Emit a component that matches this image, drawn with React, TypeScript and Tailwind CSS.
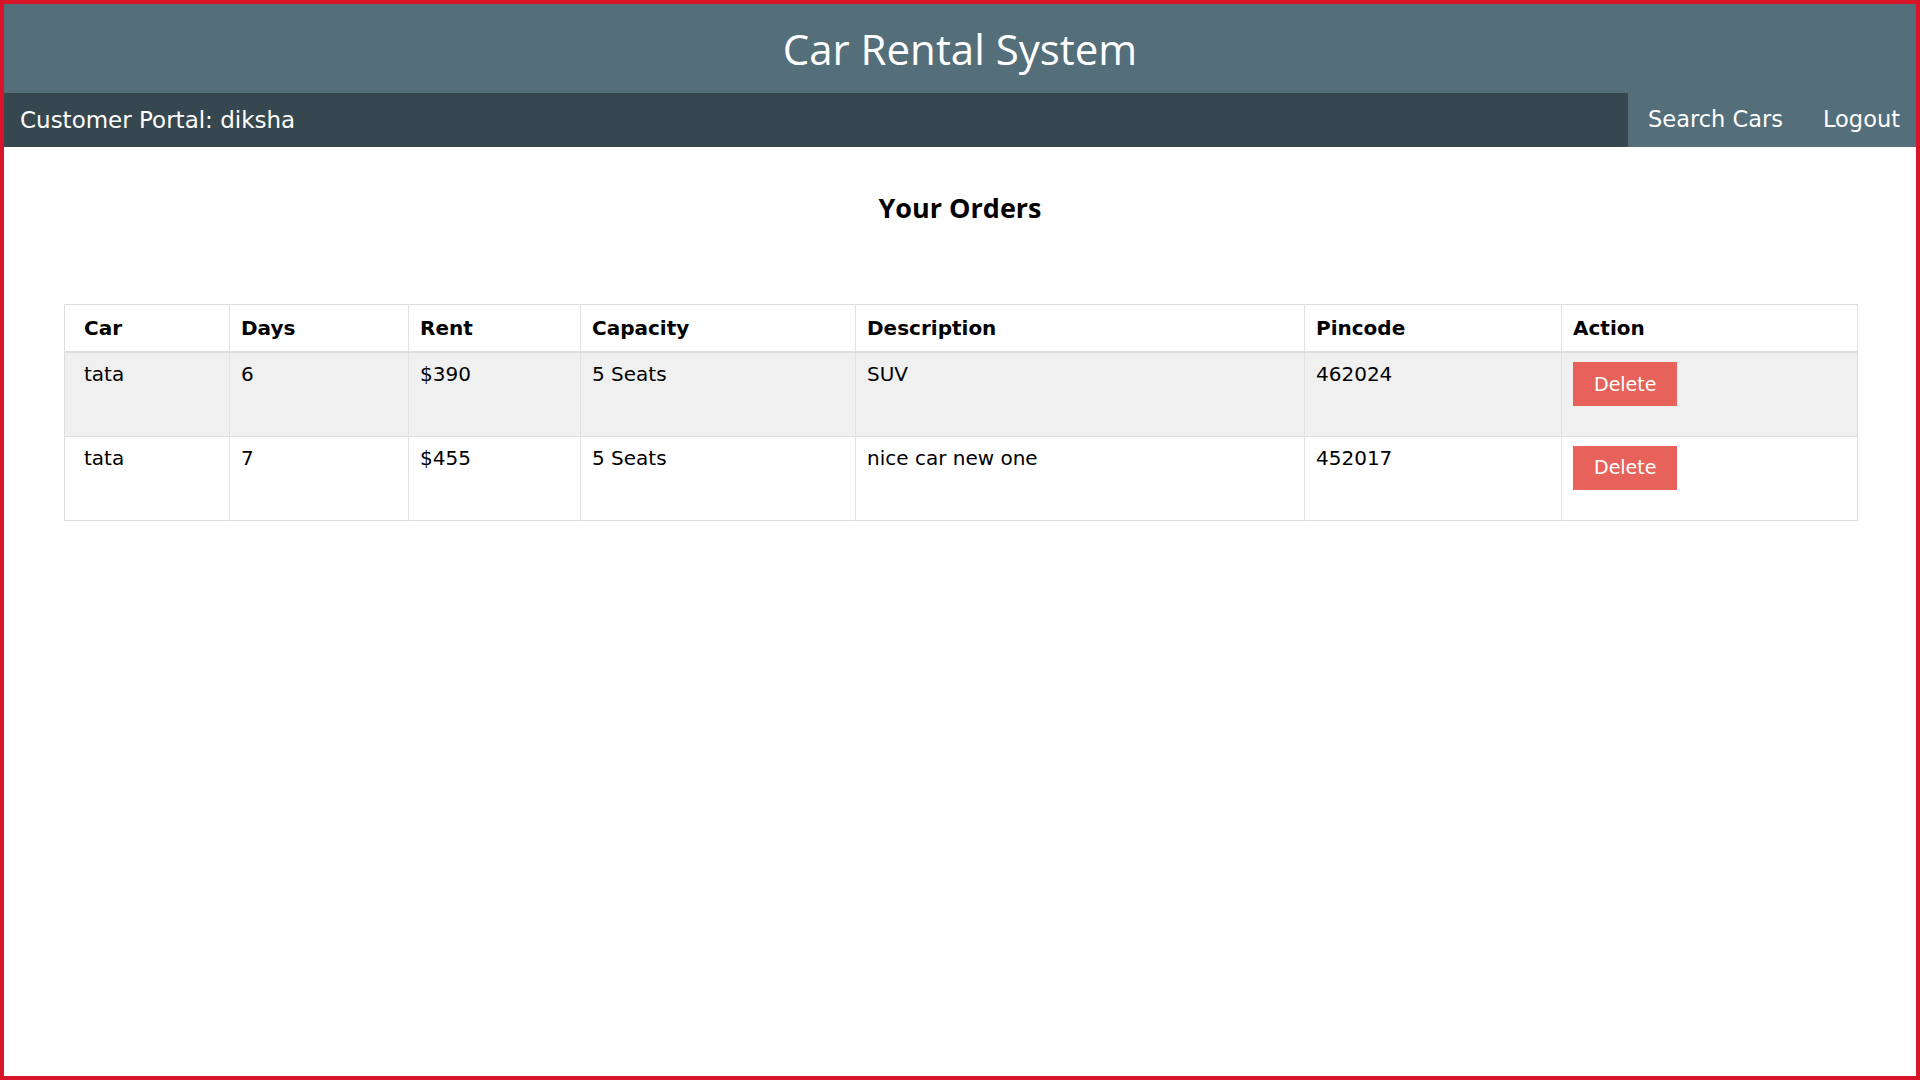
const orders = [
  { car: 'tata', days: '6', rent: '$390', capacity: '5 Seats', description: 'SUV', pincode: '462024' },
  { car: 'tata', days: '7', rent: '$455', capacity: '5 Seats', description: 'nice car new one', pincode: '452017' },
];

const columns = [
  { label: 'Car', width: 'w-[165px]', pad: 'pl-[19px]' },
  { label: 'Days', width: 'w-[179px]', pad: 'pl-[11px]' },
  { label: 'Rent', width: 'w-[172px]', pad: 'pl-[11px]' },
  { label: 'Capacity', width: 'w-[275px]', pad: 'pl-[11px]' },
  { label: 'Description', width: 'w-[449px]', pad: 'pl-[11px]' },
  { label: 'Pincode', width: 'w-[257px]', pad: 'pl-[11px]' },
  { label: 'Action', width: '', pad: 'pl-[11px]' },
];

export default function App() {
  return (
    <div className="h-screen border-4 border-[#d7152a] bg-white flex flex-col font-['DejaVu_Sans',Verdana,sans-serif] text-black">
      <header className="h-[89px] bg-[#546e7a] flex items-center justify-center">
        <h1 className="font-['Open_Sans',sans-serif] text-[42px] leading-none text-white">Car Rental System</h1>
      </header>

      <nav className="h-[54px] flex">
        <div className="flex-1 bg-[#37474f] flex items-center pl-4">
          <span className="text-[23px] text-white">Customer Portal: diksha</span>
        </div>
        <div className="bg-[#546e7a] flex items-center">
          <a className="px-5 text-[22.5px] text-white cursor-pointer">Search Cars</a>
          <a className="pl-5 pr-4 text-[22.5px] text-white cursor-pointer">Logout</a>
        </div>
      </nav>

      <main className="flex-1">
        <h2 className="mt-[43px] text-center font-['Open_Sans',sans-serif] font-bold text-[27px] leading-[36px]">Your Orders</h2>

        <div className="mt-[78px] ml-[60px] mr-[58px]">
          <table className="w-full table-fixed border-collapse border border-[#dddddd] text-[20px]">
            <thead>
              <tr className="border-b-2 border-[#dddddd]">
                {columns.map((col) => (
                  <th
                    key={col.label}
                    className={`${col.width} ${col.pad} py-[8px] text-left font-bold border-r border-[#e2e2e2]`}
                  >
                    {col.label}
                  </th>
                ))}
              </tr>
            </thead>
            <tbody>
              {orders.map((o, i) => (
                <tr key={i} className={`h-[84px] border-b border-[#dddddd] ${i % 2 === 0 ? 'bg-[#f0f0f0]' : 'bg-white'}`}>
                  <td className="align-top pl-[19px] pt-[6px] border-r border-[#e2e2e2]">{o.car}</td>
                  <td className="align-top pl-[11px] pt-[6px] border-r border-[#e2e2e2]">{o.days}</td>
                  <td className="align-top pl-[11px] pt-[6px] border-r border-[#e2e2e2]">{o.rent}</td>
                  <td className="align-top pl-[11px] pt-[6px] border-r border-[#e2e2e2]">{o.capacity}</td>
                  <td className="align-top pl-[11px] pt-[6px] border-r border-[#e2e2e2]">{o.description}</td>
                  <td className="align-top pl-[11px] pt-[6px] border-r border-[#e2e2e2]">{o.pincode}</td>
                  <td className="align-top pl-[11px] pt-[9px]">
                    <button className="h-[44px] px-[21px] bg-[#e6625a] text-white text-[19px]">Delete</button>
                  </td>
                </tr>
              ))}
            </tbody>
          </table>
        </div>
      </main>
    </div>
  );
}
